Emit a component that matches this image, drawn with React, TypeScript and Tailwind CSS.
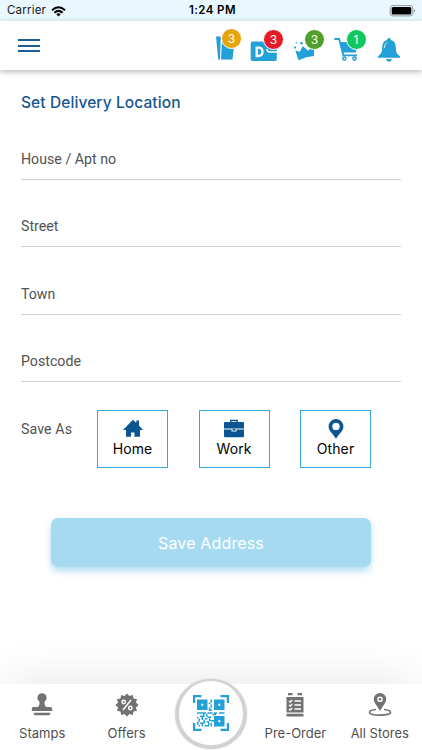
import React from "react";

const BLUE = "#24a0d8";
const NAVY = "#0a5592";
const GREY = "#727272";

function Badge({ count, className }: { count: number; className: string }) {
  return (
    <span
      className={`absolute flex h-[21px] w-[21px] items-center justify-center rounded-full border border-white font-[Inter,sans-serif] text-[12px] leading-none text-white ${className}`}
    >
      {count}
    </span>
  );
}

function HeaderIcon({ children, badge }: { children: React.ReactNode; badge?: React.ReactNode }) {
  return (
    <button className="relative h-[49px] w-[42px]">
      <svg width="42" height="49" viewBox="0 0 42 49" fill={BLUE} className="block">
        {children}
      </svg>
      {badge}
    </button>
  );
}

function Field({ label }: { label: string }) {
  return (
    <div className="h-[67.3px]">
      <div className="flex h-[34px] items-start border-b border-[#d2d2d2] pt-[3px] text-[14.2px] leading-[20px] text-[#525252]">
        {label}
      </div>
    </div>
  );
}

function SaveOption({ label, children }: { label: string; children: React.ReactNode }) {
  return (
    <button className="flex h-[58px] w-[71px] flex-col items-center border border-[#36a8db] bg-white pt-[8px]">
      <svg width="22" height="21" viewBox="0 0 22 21" fill={NAVY}>
        {children}
      </svg>
      <span className="font-[Inter,sans-serif] text-[14px] leading-[18px] tracking-[0.1px] text-black">{label}</span>
    </button>
  );
}

function NavItem({ label, children }: { label: string; children: React.ReactNode }) {
  return (
    <button className="flex flex-col items-center pt-[8px]">
      <svg width="26" height="26" viewBox="0 0 26 26" fill={GREY}>
        {children}
      </svg>
      <span className="mt-[5px] whitespace-nowrap font-[Inter,sans-serif] text-[13px] leading-[20px] text-[#505050]">
        {label}
      </span>
    </button>
  );
}

function QrCode() {
  return (
    <svg width="38" height="38" viewBox="0 0 38 38" fill={BLUE}>
      <path d="M1 1h8.500v2.200H3.200V9H1zM28.500 1H37v8h-2.200V3.200h-6.300zM1 29h2.200v5.800h6.300V37H1zM34.800 29H37v8h-8.500v-2.200h6.300z" />
      <path
        fillRule="evenodd"
        d="M5 5.500h10.500V16H5zM9.300 9.800h2v2h-2zM22 5.500h10.500V16H22zM26.300 9.800h2v2h-2zM22 22h10.500v10.500H22zM26.300 26.300h2v2h-2z"
      />
      <path d="M18.500 5.500H20v3h-1.500zM16.800 8.500h1.700V10h-1.700zM18.500 10.500H20v3h-1.500zM16.800 13.500h1.700V17h-1.700zM18.500 15.500H20V17h-1.500zM5 18.300h9v1.500H5zM15.500 18.300h5v1.500h-5zM22 18.300h3v1.500h-3zM27 18.300h5.500v1.500H27zM20.500 19.800H24v1.500h-3.500zM11 19.800h1.500V23H11zM14 19.800h1.500v3H14zM8 21.500h3V23H8zM5 23h1.500v1.500H5zM9.500 23H11v3H9.500zM6.500 24.500H8v3H6.500zM15.500 22.500H19V24h-3.500zM13 24h2.500v1.500H13zM17 24.500h1.500V27H17zM18.500 26H22v1.500h-3.500zM11.500 25.500H13v4h-1.500zM5 27.500h1.500V31H5zM8 28.500h3.500V30H8zM14.500 27H17v1.500h-2.500zM9.500 30H11v2.500H9.500zM12.500 31H17v1.500h-4.500zM6.500 31H8v1.500H6.500zM16 28.500h1.500V31H16zM18.500 29H20v3.500h-1.500z" />
    </svg>
  );
}

const SEAL = Array.from({ length: 24 }, (_, i) => {
  const r = i % 2 === 0 ? 11.6 : 9.2;
  const a = (i * Math.PI) / 12;
  return `${13 + r * Math.cos(a)},${13 + r * Math.sin(a)}`;
}).join(" ");

export default function App() {
  return (
    <div className="flex h-[750px] w-[422px] flex-col overflow-hidden bg-white font-[Roboto,sans-serif]">
      <div className="grid h-[21px] shrink-0 grid-cols-3 items-center bg-[#e9f8fe] pl-[7px] pr-[6px] font-[Inter,sans-serif] text-[11.5px] text-[#17191b]">
        <div className="flex items-center gap-[5px] pt-px">
          <span className="tracking-[0.2px]">Carrier</span>
          <svg width="15" height="11" viewBox="0 0 15 11" fill="none" stroke="#000" strokeWidth="2">
            <path d="M1 4.200Q7.500-1.800 14 4.200M3.400 6.700Q7.500 3 11.600 6.700" />
            <path d="M5.300 8.200Q7.500 6.500 9.700 8.200L7.500 10.600Z" fill="#000" stroke="none" />
          </svg>
        </div>
        <span className="pl-[2px] pt-px text-center font-semibold tracking-[0.4px] text-black">1:24 PM</span>
        <svg width="27" height="12" viewBox="0 0 27 12" className="justify-self-end">
          <rect x="1.200" y=".6" width="22.600" height="10.300" rx="2.800" fill="none" stroke="#8b989d" />
          <rect x="2.700" y="2" width="19.600" height="7.500" rx="1.500" />
          <path d="M25 4q2.400 1.800 0 3.600z" fill="#8b989d" />
        </svg>
      </div>

      <header className="relative z-10 flex h-[49px] shrink-0 items-start justify-between bg-white pl-[18px] pr-[6px] shadow-[0_2px_6px_rgba(0,0,0,0.28)]">
        <button className="flex h-[49px] w-[22px] flex-col gap-[3.5px] pt-[18px]" aria-label="Menu">
          <span className="h-[2px] w-[22px] bg-[#1d5d98]" />
          <span className="h-[2px] w-[22px] bg-[#1d5d98]" />
          <span className="h-[2px] w-[22px] bg-[#1d5d98]" />
        </button>
        <div className="flex">
          <HeaderIcon badge={<Badge count={3} className="left-[15px] top-[7px] bg-[#e7a40b]" />}>
            <path d="M10 15.500h4.800L14 38.500h-1.800zM16 20h12.500L26.500 38.500H15z" />
          </HeaderIcon>
          <HeaderIcon badge={<Badge count={3} className="left-[15px] top-[8px] bg-[#e71b23]" />}>
            <path d="M4.500 20.500h11l1.500 2H27q1.800 0 1.800 1.800V38q0 2-2 2H4.700q-2 0-2-2V22.500q0-2 1.800-2z" />
            <path d="M8.700 26.700v8.300h1.500q4.300 0 4.300-4.150t-4.300-4.150z" fill="none" stroke="#fff" strokeWidth="2.300" />
            <path d="M19 28q0 3 2.500 3h8" fill="none" stroke="#fff" strokeWidth="1.500" />
          </HeaderIcon>
          <HeaderIcon badge={<Badge count={3} className="left-[14px] top-[8px] bg-[#4fa12b]" />}>
            <path d="M5.300 29.500l4.500 1.200L12.800 25l5 4.500L24 26v9Q16 35.500 8.500 39.300z" />
            <circle cx="5" cy="26.600" r="1.100" />
            <circle cx="11.500" cy="22.300" r="1.300" />
            <circle cx="6.300" cy="21.800" r=".7" />
          </HeaderIcon>
          <HeaderIcon badge={<Badge count={1} className="left-[13.5px] top-[8px] bg-[#10c760]" />}>
            <path d="M2.300 18h4.800l4.300 16.300H25" fill="none" stroke={BLUE} strokeWidth="1.800" />
            <path d="M8 21h17.500L24 31.500H11z" />
            <circle cx="12.300" cy="37.600" r="1.600" fill="#fff" stroke={BLUE} strokeWidth="1.500" />
            <circle cx="22.500" cy="37.600" r="1.600" fill="#fff" stroke={BLUE} strokeWidth="1.500" />
          </HeaderIcon>
          <HeaderIcon>
            <circle cx="15" cy="19" r="1.900" />
            <path d="M15 18.800c4.800 0 6.800 3.600 6.800 7.600 0 5 1.500 7 4.200 8.800v1.600H4v-1.600c2.700-1.800 4.200-3.800 4.200-8.800 0-4 2-7.600 6.800-7.600z" />
            <path d="M12 38h6q-.7 2.700-3 2.700T12 38z" />
            <path d="M10.200 27q0-4 3-5.500" fill="none" stroke="#fff" strokeWidth=".8" />
          </HeaderIcon>
        </div>
      </header>

      <main className="flex flex-1 flex-col bg-white">
        <div className="px-[21px]">
          <h1 className="pt-[23px] font-[Inter,sans-serif] text-[15.5px] font-medium leading-[20px] tracking-[0.1px] text-[#145792]">
            Set Delivery Location
          </h1>
          <form className="pt-[33px]">
            <Field label="House / Apt no" />
            <Field label="Street" />
            <Field label="Town" />
            <Field label="Postcode" />
          </form>
          <div className="-mt-[5.4px] flex items-start">
            <span className="w-[76px] pt-[9px] text-[14.2px] leading-[20px] tracking-[0.1px] text-[#525252]">Save As</span>
            <div className="flex gap-[30.5px]">
              <SaveOption label="Home">
                <path d="M11 .8L1 11H4v6.800h5v-4.300h3.500v4.300H18V11h3L17 6.600V1.500h-2.700v2.500z" />
              </SaveOption>
              <SaveOption label="Work">
                <path d="M7.800 3V1.500h6.400V3" fill="none" stroke={NAVY} strokeWidth="1.500" />
                <path d="M2 3h18q1 0 1 1v5.500H1V4q0-1 1-1zM1 10.500h7.500v2h5v-2H21V17q0 1.200-1 1.200H2Q1 18.200 1 17z" />
                <rect x="9.500" y="9.800" width="3" height="1.800" />
              </SaveOption>
              <SaveOption label="Other">
                <path fillRule="evenodd" d="M11 0a7.400 7.400 0 0 0-7.400 7.400C3.600 12 8 14.500 11 19.800c3-5.300 7.400-7.800 7.400-12.400A7.400 7.400 0 0 0 11 0zm0 3.700a3.700 3.700 0 1 1 0 7.400 3.700 3.700 0 0 1 0-7.400z" />
              </SaveOption>
            </div>
          </div>
        </div>
        <button className="ml-[51px] mt-[50px] h-[49px] w-[320px] rounded-[7px] bg-[#a6daf1] pt-px font-[Inter,sans-serif] text-[16px] tracking-[0.15px] text-white shadow-[0_4px_7px_rgba(135,205,235,0.65)]">
          Save Address
        </button>
      </main>

      <nav className="relative grid h-[66px] shrink-0 grid-cols-5 bg-white shadow-[0_-14px_44px_-8px_rgba(0,0,0,0.09)]">
        <NavItem label="Stamps">
          <circle cx="13" cy="5.800" r="4.600" />
          <path d="M10.500 8h5v3q.2 3.500 2 4h4q1.700 0 1.700 1.800V19H2.800v-2.200Q2.800 15 4.500 15h4q1.800-.5 2-4zM4.500 20.800h17q-.3 2.500-1.800 2.500H6.300q-1.500 0-1.800-2.500z" />
        </NavItem>
        <NavItem label="Offers">
          <polygon points={SEAL} />
          <g fill="none" stroke="#fff" strokeWidth="1.400">
            <path d="M17 8L9 18" />
            <circle cx="9.700" cy="10" r="1.700" />
            <circle cx="16.300" cy="16" r="1.700" />
          </g>
        </NavItem>
        <div className="flex justify-center">
          <button
            aria-label="Scan"
            className="-mt-[5px] flex h-[70px] w-[72px] shrink-0 items-center justify-center rounded-full border-[4px] border-t-[2px] border-[#d2d2d2] bg-white shadow-[0_0_2px_rgba(0,0,0,0.15)]"
          >
            <QrCode />
          </button>
        </div>
        <NavItem label="Pre-Order">
          <path d="M6 1h4.500v2.200H6zM15.500 1H20v2.200h-4.500zM4.500 5h17v15.500h-17zM4.500 21.800h17V24.500h-17z" />
          <path d="M12.500 9H19M12.500 13H19M12.500 17H19M7 9l1.200 1 2-2M7 13l1.200 1 2-2M7 17l1.200 1 2-2" fill="none" stroke="#fff" strokeWidth="1.300" />
        </NavItem>
        <NavItem label="All Stores">
          <path d="M9 17.500C4.500 18 2.500 19 2.500 20.300c0 1.800 4.500 2.900 10.500 2.900s10.500-1.100 10.500-2.900c0-1.300-2-2.300-6.500-2.800" fill="none" stroke={GREY} strokeWidth="1.700" />
          <path fillRule="evenodd" d="M13 1a6.200 6.200 0 0 0-6.200 6.200C6.800 11 10.500 14 13 19c2.500-5 6.200-8 6.200-11.800A6.200 6.200 0 0 0 13 1zm0 3.400a2.800 2.800 0 1 1 0 5.600 2.800 2.800 0 0 1 0-5.600z" />
          <circle cx="13" cy="7.200" r="1.300" />
        </NavItem>
      </nav>
    </div>
  );
}
